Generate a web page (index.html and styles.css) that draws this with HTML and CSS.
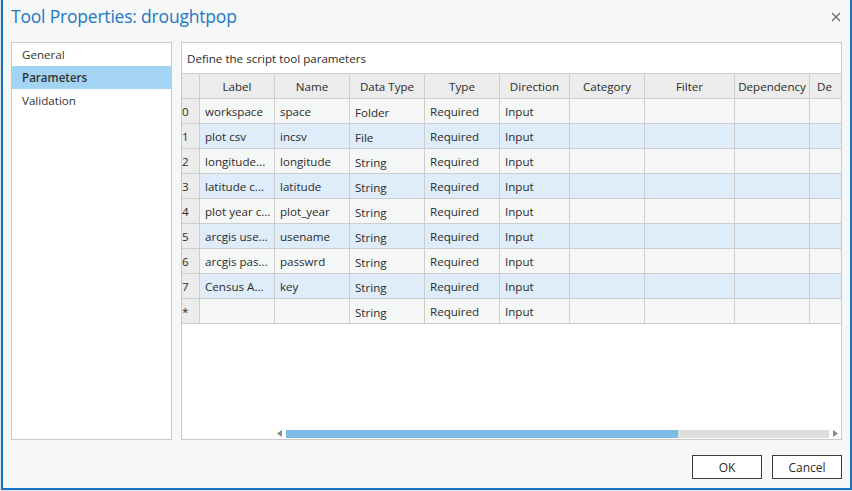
FILE: index.html
```html
<!DOCTYPE html>
<html>
<head>
<meta charset="utf-8">
<link rel="stylesheet" href="styles.css">
</head>
<body>
<div class="window">
  <div class="titlebar">
    <div class="title">Tool Properties: droughtpop</div>
    <svg class="close" width="10" height="10" viewBox="0 0 10 10"><path d="M1 1 L9 9 M9 1 L1 9" stroke="#6b6b6b" stroke-width="1.3" fill="none"/></svg>
  </div>
  <div class="main">
    <div class="nav">
      <div class="nav-item">General</div>
      <div class="nav-item active">Parameters</div>
      <div class="nav-item">Validation</div>
    </div>
    <div class="panel">
      <div class="desc">Define the script tool parameters</div>
      <div class="grid">
        <div class="row head">
          <div class="c rh"></div>
          <div class="c w75 ctr">Label</div>
          <div class="c w75 ctr">Name</div>
          <div class="c w75 ctr">Data Type</div>
          <div class="c w75 ctr">Type</div>
          <div class="c w70 ctr">Direction</div>
          <div class="c w75 ctr">Category</div>
          <div class="c w90 ctr">Filter</div>
          <div class="c w75 ctr">Dependency</div>
          <div class="c w100 clip">De</div>
        </div>
        <div class="row">
          <div class="c rh">0</div><div class="c w75">workspace</div><div class="c w75">space</div><div class="c w75 low">Folder</div><div class="c w75">Required</div><div class="c w70">Input</div><div class="c w75"></div><div class="c w90"></div><div class="c w75"></div><div class="c w100"></div>
        </div>
        <div class="row alt">
          <div class="c rh">1</div><div class="c w75">plot csv</div><div class="c w75">incsv</div><div class="c w75 low">File</div><div class="c w75">Required</div><div class="c w70">Input</div><div class="c w75"></div><div class="c w90"></div><div class="c w75"></div><div class="c w100"></div>
        </div>
        <div class="row">
          <div class="c rh">2</div><div class="c w75">longitude...</div><div class="c w75">longitude</div><div class="c w75 low">String</div><div class="c w75">Required</div><div class="c w70">Input</div><div class="c w75"></div><div class="c w90"></div><div class="c w75"></div><div class="c w100"></div>
        </div>
        <div class="row alt">
          <div class="c rh">3</div><div class="c w75">latitude c...</div><div class="c w75">latitude</div><div class="c w75 low">String</div><div class="c w75">Required</div><div class="c w70">Input</div><div class="c w75"></div><div class="c w90"></div><div class="c w75"></div><div class="c w100"></div>
        </div>
        <div class="row">
          <div class="c rh">4</div><div class="c w75">plot year c...</div><div class="c w75">plot_year</div><div class="c w75 low">String</div><div class="c w75">Required</div><div class="c w70">Input</div><div class="c w75"></div><div class="c w90"></div><div class="c w75"></div><div class="c w100"></div>
        </div>
        <div class="row alt">
          <div class="c rh">5</div><div class="c w75">arcgis use...</div><div class="c w75">usename</div><div class="c w75 low">String</div><div class="c w75">Required</div><div class="c w70">Input</div><div class="c w75"></div><div class="c w90"></div><div class="c w75"></div><div class="c w100"></div>
        </div>
        <div class="row">
          <div class="c rh">6</div><div class="c w75">arcgis pas...</div><div class="c w75">passwrd</div><div class="c w75 low">String</div><div class="c w75">Required</div><div class="c w70">Input</div><div class="c w75"></div><div class="c w90"></div><div class="c w75"></div><div class="c w100"></div>
        </div>
        <div class="row alt">
          <div class="c rh">7</div><div class="c w75">Census A...</div><div class="c w75">key</div><div class="c w75 low">String</div><div class="c w75">Required</div><div class="c w70">Input</div><div class="c w75"></div><div class="c w90"></div><div class="c w75"></div><div class="c w100"></div>
        </div>
        <div class="row">
          <div class="c rh">*</div><div class="c w75"></div><div class="c w75"></div><div class="c w75 low">String</div><div class="c w75">Required</div><div class="c w70">Input</div><div class="c w75"></div><div class="c w90"></div><div class="c w75"></div><div class="c w100"></div>
        </div>
      </div>
      <div class="spacer"></div>
      <div class="hscroll">
        <svg class="arrow" width="7" height="9" viewBox="0 0 7 9"><path d="M6 1 L6 8 L1 4.5 Z" fill="#8a8a8a"/></svg>
        <div class="track"><div class="thumb" style="width: 392px"></div></div>
        <svg class="arrow" width="7" height="9" viewBox="0 0 7 9"><path d="M1 1 L1 8 L6 4.5 Z" fill="#8a8a8a"/></svg>
      </div>
    </div>
  </div>
  <div class="footer">
    <button class="btn">OK</button>
    <button class="btn">Cancel</button>
  </div>
</div>
</body>
</html>
```
FILE: styles.css
```css
* { box-sizing: border-box; }
html, body { margin: 0; padding: 0; }
body {
  background: #e2e2e2;
  font-family: "Open Sans", "Noto Sans", sans-serif;
  font-size: 11.6px;
  color: #2b2b2b;
  width: 852px;
  height: 491px;
  overflow: hidden;
}
.window {
  margin-left: 1px;
  width: 851px;
  height: 490px;
  background: #f6f7f7;
  border-left: 2px solid #1c72c2;
  border-right: 2px solid #1c72c2;
  border-bottom: 2px solid #1c72c2;
  padding: 0 8px;
  display: flex;
  flex-direction: column;
}
.titlebar {
  height: 42px;
  display: flex;
  align-items: flex-start;
  justify-content: space-between;
}
.title {
  font-family: "Open Sans", sans-serif;
  font-weight: 400;
  font-size: 17.5px;
  color: #1e78c2;
  margin-top: 4px;
  letter-spacing: -0.2px;
}
.close { margin-top: 12px; margin-right: 1px; }
.main {
  height: 398px;
  display: flex;
  gap: 9px;
}
.nav {
  width: 161px;
  background: #fff;
  border: 1px solid #c9c9c9;
}
.nav-item {
  height: 23px;
  line-height: 24px;
  padding-left: 10px;
  color: #333;
}
.nav-item.active {
  background: #a3d4f3;
  font-weight: 600;
}
.panel {
  width: 661px;
  background: #fff;
  border: 1px solid #c9c9c9;
  display: flex;
  flex-direction: column;
  overflow: hidden;
}
.desc {
  height: 31px;
  line-height: 32px;
  padding-left: 5px;
  border-bottom: 1px solid #cfcfcf;
  flex: none;
}
.grid { flex: none; }
.row {
  display: flex;
  height: 25px;
  background: #f5f7f7;
}
.row.alt { background: #deedf9; }
.row.head { background: #ececec; }
.c {
  flex: none;
  height: 25px;
  line-height: 25px;
  border-right: 1px solid #cdcdcd;
  border-bottom: 1px solid #cdcdcd;
  padding-left: 5px;
  white-space: nowrap;
  overflow: hidden;
}
.c.low { line-height: 27px; }
.c.rh {
  width: 18px;
  padding-left: 0;
  background: #ececec;
}
.c.ctr { text-align: center; padding-left: 0; }
.c.clip { padding-left: 7px; }
.w70 { width: 70px; }
.w75 { width: 75px; }
.w90 { width: 90px; }
.w100 { width: 100px; }
.spacer { flex: 1; }
.hscroll {
  flex: none;
  height: 9px;
  margin-bottom: 1px;
  margin-left: 94px;
  display: flex;
  align-items: center;
  gap: 3px;
}
.track {
  width: 543px;
  height: 8px;
  background: #dedede;
}
.thumb {
  height: 8px;
  background: #7cbde8;
}
.footer {
  flex: 1;
  display: flex;
  justify-content: flex-end;
  align-items: flex-start;
  gap: 10px;
  padding-top: 15px;
}
.btn {
  width: 70px;
  height: 24px;
  background: #fff;
  border: 1px solid #3c3c3c;
  font-family: "Open Sans", sans-serif;
  font-size: 12px;
  color: #2b2b2b;
  padding: 0;
}
```
